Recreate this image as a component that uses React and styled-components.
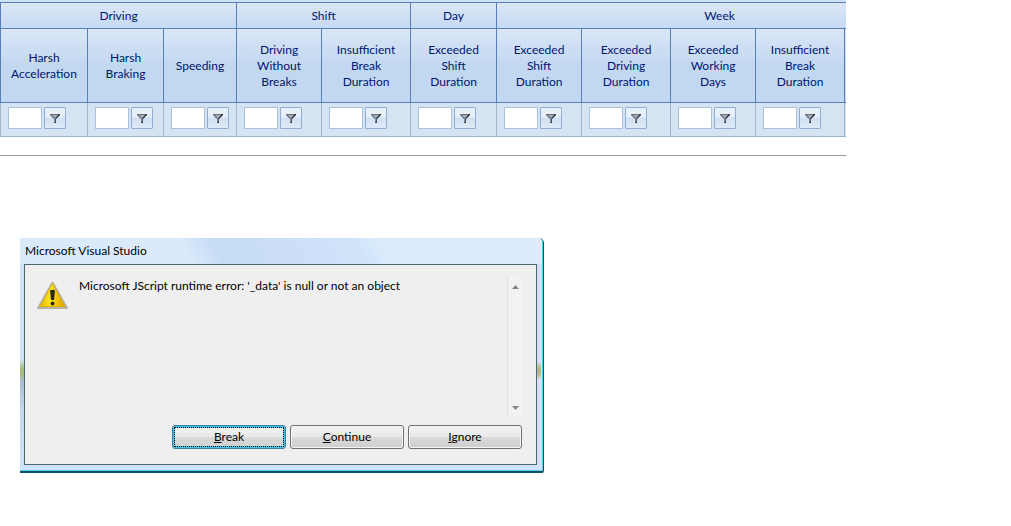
import styled, { createGlobalStyle } from 'styled-components';

const GlobalStyle = createGlobalStyle`
    * {
        box-sizing: border-box;
    }

    body {
        margin: 0;
        background-color: #ffffff;
        font-family: Lato, 'Open Sans', sans-serif;
        font-size: 12px;
    }
`;

const groups = [
    { title: 'Driving', span: 3 },
    { title: 'Shift', span: 2 },
    { title: 'Day', span: 1 },
    { title: 'Week', span: 5 },
];

const columns = [
    { id: 'acceleration', lines: ['Harsh', 'Acceleration'], width: 87 },
    { id: 'braking', lines: ['Harsh', 'Braking'], width: 76 },
    { id: 'speeding', lines: ['Speeding'], width: 73 },
    { id: 'shift-breaks', lines: ['Driving', 'Without', 'Breaks'], width: 85 },
    { id: 'shift-break-duration', lines: ['Insufficient', 'Break', 'Duration'], width: 89 },
    { id: 'day-shift', lines: ['Exceeded', 'Shift', 'Duration'], width: 86 },
    { id: 'week-shift', lines: ['Exceeded', 'Shift', 'Duration'], width: 85 },
    { id: 'week-driving', lines: ['Exceeded', 'Driving', 'Duration'], width: 89 },
    { id: 'week-days', lines: ['Exceeded', 'Working', 'Days'], width: 85 },
    { id: 'week-break-duration', lines: ['Insufficient', 'Break', 'Duration'], width: 89 },
    { id: 'spare', lines: [], width: 98 },
];

const actions = ['Break', 'Continue', 'Ignore'];

const FunnelIcon = () => (
    <svg width="10" height="10" viewBox="0 0 10 10" aria-hidden="true">
        <path d="M0 1H10V2L6 6V10H4V6L0 2Z" fill="#a3abb6" />
        <path d="M0 1H10V2H0Z" fill="#6d727a" />
        <path d="M0 1H1L4.5 5V10H4V6L0 2Z" fill="#6d727a" />
        <path d="M10 1H9L5.3 5V10H6V6L10 2Z" fill="#2c2f34" />
        <path d="M4 9H6V10H4Z" fill="#43474d" />
    </svg>
);

const WarningIcon = () => (
    <svg width="32" height="29" viewBox="0 0 32 29" role="img" aria-label="Warning">
        <defs>
            <linearGradient id="warning" x1="0" x2="1" y1="0" y2="0">
                <stop offset="0" stopColor="#e9b400" />
                <stop offset="0.45" stopColor="#ffec1c" />
                <stop offset="0.55" stopColor="#fbd40a" />
                <stop offset="1" stopColor="#e09c00" />
            </linearGradient>
        </defs>
        <path d="M15.5 1.5L30 27H1Z" fill="#c9c9c3" stroke="#b4b4ad" strokeWidth="2" strokeLinejoin="round" />
        <path d="M15.5 2.5L28 25.5H3Z" fill="url(#warning)" stroke="#dcb000" strokeWidth="1" strokeLinejoin="round" />
        <path d="M13 9.5Q15.5 8 18 9.5L17 19H14Z" fill="#2c2a1c" />
        <circle cx="15.5" cy="22.5" r="2" fill="#2c2a1c" />
    </svg>
);

const ArrowIcon = ({ down }) => (
    <svg width="7" height="4" viewBox="0 0 7 4" aria-hidden="true">
        <path d={down ? 'M0 0H7L3.5 4Z' : 'M0 4H7L3.5 0Z'} fill="#858585" />
    </svg>
);

const App = () => (
    <>
        <GlobalStyle />
        <GridSection>
            <Grid>
                <colgroup>
                    {columns.map((column) => (
                        <Column key={column.id} $width={column.width} />
                    ))}
                </colgroup>
                <thead>
                    <tr>
                        {groups.map((group) => (
                            <GroupHead key={group.title} colSpan={group.span} scope="colgroup">
                                {group.title}
                            </GroupHead>
                        ))}
                    </tr>
                    <tr>
                        {columns.map((column) => (
                            <ColumnHead key={column.id} scope="col">
                                {column.lines.map((line) => (
                                    <HeadLine key={line}>{line}</HeadLine>
                                ))}
                            </ColumnHead>
                        ))}
                    </tr>
                </thead>
                <tbody>
                    <tr>
                        {columns.map((column) => (
                            <FilterCell key={column.id}>
                                {column.lines.length > 0 && (
                                    <Filter>
                                        <FilterInput type="text" aria-label={column.lines.join(' ')} />
                                        <FilterButton type="button" aria-label="Filter">
                                            <FunnelIcon />
                                        </FilterButton>
                                    </Filter>
                                )}
                            </FilterCell>
                        ))}
                    </tr>
                </tbody>
            </Grid>
        </GridSection>
        <Dialog role="dialog" aria-labelledby="dialog-title">
            <DialogTitle id="dialog-title">Microsoft Visual Studio</DialogTitle>
            <DialogBody>
                <MessageRow>
                    <WarningIcon />
                    <Message>Microsoft JScript runtime error: '_data' is null or not an object</Message>
                    <ScrollTrack>
                        <ArrowIcon />
                        <ArrowIcon down />
                    </ScrollTrack>
                </MessageRow>
                <Actions>
                    {actions.map((action, index) => (
                        <ActionButton key={action} type="button" $focused={index === 0}>
                            <u>{action[0]}</u>
                            {action.slice(1)}
                        </ActionButton>
                    ))}
                </Actions>
            </DialogBody>
        </Dialog>
    </>
);

export default App;

const GridSection = styled.section`
    max-width: 846px;
    padding-bottom: 18px;
    border-bottom: 1px solid #999999;
    overflow: hidden;
`;

const Grid = styled.table`
    width: 942px;
    table-layout: fixed;
    border-collapse: separate;
    border-spacing: 0;
    border-top: 2px solid #cfe0f5;
    color: #00156e;
`;

const Column = styled.col`
    width: ${({ $width }) => $width}px;
`;

const HeadCell = styled.th`
    padding: 0;
    border-left: 1px solid #5a7fb8;
    border-bottom: 1px solid #5a7fb8;
    font-weight: 400;
    line-height: 16px;
    text-align: center;
`;

const GroupHead = styled(HeadCell)`
    height: 27px;
    border-top: 1px solid #5a7fb8;
    background: linear-gradient(#dae6f6, #c5daf3);
`;

const ColumnHead = styled(HeadCell)`
    height: 74px;
    background: linear-gradient(#dae6f6, #c2d8f1 50%);
`;

const HeadLine = styled.span`
    display: block;
`;

const FilterCell = styled.td`
    height: 34px;
    padding: 0 7px 3px;
    border-left: 1px solid #9eb6ce;
    border-bottom: 1px solid #9eb6ce;
    background-color: #d5e4f3;
`;

const Filter = styled.div`
    display: flex;
    gap: 2px;
`;

const FilterInput = styled.input`
    width: 34px;
    height: 22px;
    padding: 0 2px;
    border: 1px solid #abc1de;
    background-color: #ffffff;
    font: inherit;
`;

const FilterButton = styled.button`
    display: flex;
    align-items: center;
    justify-content: center;
    width: 22px;
    height: 22px;
    padding: 0;
    border: 1px solid #92add0;
    border-radius: 1px;
    background: linear-gradient(#e6effa 45%, #cfe0f5 50%, #dfeaf8);
`;

const Dialog = styled.div`
    max-width: 524px;
    margin: 82px 20px 0;
    padding: 0 6px 6px 4px;
    border-right: 1px solid #14515f;
    border-bottom: 2px solid #0f5266;
    border-radius: 0 5px 2px 0;
    background:
        linear-gradient(transparent 52%, #a9bd7c 56%, #a9bd7c 58%, #a9bfd6 62%, #c3d8ee 74%, transparent) left / 4px 100% no-repeat,
        linear-gradient(transparent 53%, #a9bd7c 56%, #a9bd7c 58%, transparent 61%) right 2px top / 4px 100% no-repeat,
        linear-gradient(60deg, #dbeafb 32%, #c6dcf5 38%, #cfe3f9 64%, #dcecfc 70%) top / 100% 26px no-repeat,
        #cfe4fa;
    box-shadow: inset -1px -1px 0 #4fd0ee;
    color: #000000;
`;

const DialogTitle = styled.div`
    padding: 4px 1px 4px;
    line-height: 18px;
`;

const DialogBody = styled.div`
    padding: 12px 14px 15px 12px;
    border: 1px solid #50666f;
    background-color: #efefef;
`;

const MessageRow = styled.div`
    display: flex;
    align-items: flex-start;
    gap: 10px;

    > svg:first-child {
        flex: none;
        margin-top: 4px;
    }
`;

const Message = styled.p`
    flex: 1;
    margin: 0;
    line-height: 18px;
`;

const ScrollTrack = styled.div`
    display: flex;
    flex-direction: column;
    align-items: center;
    justify-content: space-between;
    width: 15px;
    height: 140px;
    padding: 8px 0 7px;
    border-left: 1px solid #e0e0e0;
    background-color: #f2f2f2;
`;

const Actions = styled.div`
    display: flex;
    justify-content: flex-end;
    gap: 4px;
    margin-top: 8px;
`;

const ActionButton = styled.button`
    width: 114px;
    height: 24px;
    padding: 0 0 2px;
    border: 1px solid ${({ $focused }) => ($focused ? '#3a7f9b' : '#707070')};
    border-radius: 3px;
    outline: ${({ $focused }) => ($focused ? '1px dotted #000000' : 'none')};
    outline-offset: -3px;
    background: linear-gradient(#f3f3f3, #e9e9e9 48%, #dadada 52%, #cecece);
    box-shadow: ${({ $focused }) => ($focused ? 'inset 0 0 0 2px #45c3e6' : 'inset 0 0 0 1px #f6f6f6')};
    font: inherit;
    color: #000000;
`;
